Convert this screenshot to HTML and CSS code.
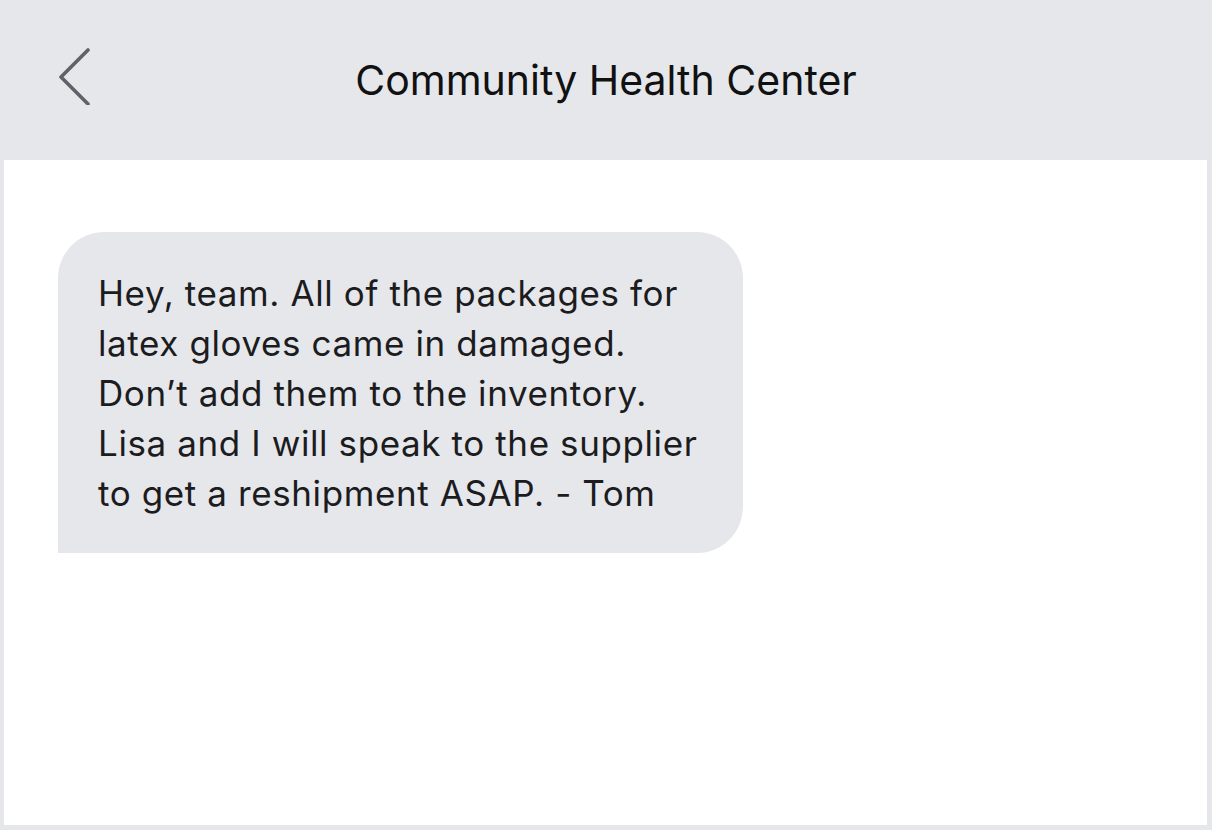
FILE: index.html
```html
<!DOCTYPE html>
<html>
<head>
<meta charset="utf-8">
<link rel="stylesheet" href="styles.css">
</head>
<body>
<div class="app">
  <header class="header">
    <span class="back">
      <svg width="40" height="70" viewBox="0 0 40 70"><path d="M32 15 L5 42 L32 69" fill="none" stroke="#5f6268" stroke-width="3.6" stroke-linecap="round" stroke-linejoin="round"/></svg>
    </span>
    <h1 class="title">Community Health Center</h1>
  </header>
  <main class="thread">
    <div class="bubble">Hey, team. All of the packages for<br>latex gloves came in damaged.<br>Don’t add them to the inventory.<br>Lisa and I will speak to the supplier<br>to get a reshipment ASAP. - Tom</div>
  </main>
</div>
</body>
</html>
```
FILE: styles.css
```css
html, body { margin: 0; padding: 0; }
body {
  width: 1212px;
  height: 830px;
  background: #e5e7eb;
  font-family: Inter, "Liberation Sans", Arial, sans-serif;
  color: #1c1c1e;
  overflow: hidden;
}
.app {
  display: flex;
  flex-direction: column;
  height: 830px;
}
.header {
  height: 160px;
  display: flex;
  align-items: center;
  justify-content: center;
  position: relative;
}
.back {
  position: absolute;
  left: 56px;
  top: 35px;
}
.title {
  margin: 0;
  font-size: 41px;
  font-weight: 400;
  color: #111;
}
.thread {
  margin: 0 5px 5px 4px;
  flex: 1;
  background: #fff;
  padding: 72px 0 0 54px;
}
.bubble {
  width: 605px;
  background: #e5e7eb;
  border-radius: 46px 46px 46px 0;
  padding: 36px 40px 35px 40px;
  font-size: 35px;
  letter-spacing: 0.6px;
  line-height: 50px;
  white-space: nowrap;
}
```
